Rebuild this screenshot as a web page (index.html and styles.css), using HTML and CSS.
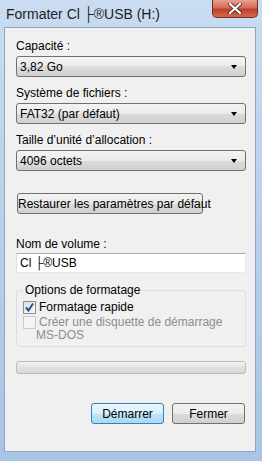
FILE: index.html
```html
<!DOCTYPE html>
<html lang="fr">
<head>
    <meta charset="UTF-8">
    <title>Formater Cl ├®USB (H:)</title>
    <link rel="stylesheet" href="styles.css">
</head>
<body>
    <div class="window">
        <div class="titlebar">
            <span class="title">Formater Cl ├®USB (H:)</span>
            <div class="close">
                <svg width="16" height="11" viewBox="0 0 16 11">
                    <path d="M3 1 L13 10 M13 1 L3 10" stroke="#5a3030" stroke-width="4" stroke-linecap="round"/>
                    <path d="M3 1 L13 10 M13 1 L3 10" stroke="#fff" stroke-width="2.2" stroke-linecap="round"/>
                </svg>
            </div>
        </div>
        <div class="client">
            <div class="label">Capacité :</div>
            <div class="combo"><span>3,82 Go</span><i class="arrow"></i></div>

            <div class="label">Système de fichiers :</div>
            <div class="combo"><span>FAT32 (par défaut)</span><i class="arrow"></i></div>

            <div class="label">Taille d’unité d’allocation :</div>
            <div class="combo"><span>4096 octets</span><i class="arrow"></i></div>

            <div class="restore-row">
                <button class="btn restore">Restaurer les paramètres par défaut</button>
            </div>

            <div class="label volume-label">Nom de volume :</div>
            <div class="textbox">Cl ├®USB</div>

            <div class="group">
                <span class="legend">Options de formatage</span>
                <div class="check-row">
                    <span class="checkbox checked">
                        <svg width="11" height="11" viewBox="0 0 11 11">
                            <path d="M2 5.5 L4.5 8.5 L9 1.5" fill="none" stroke="#2a4f9a" stroke-width="2"/>
                        </svg>
                    </span>
                    <span>Formatage rapide</span>
                </div>
                <div class="check-row disabled">
                    <span class="checkbox"></span>
                    <span class="two-lines">Créer une disquette de démarrage<span class="second">MS-DOS</span></span>
                </div>
            </div>

            <div class="progress"></div>

            <div class="actions">
                <button class="btn default">Démarrer</button>
                <button class="btn">Fermer</button>
            </div>
        </div>
    </div>
</body>
</html>
```

FILE: styles.css
```css
body {
    margin: 0;
    width: 262px;
    height: 461px;
    overflow: hidden;
    font-family: "Liberation Sans", Arial, sans-serif;
    font-size: 12px;
    color: #000;
    background: linear-gradient(to bottom, #c9dcf1, #b4cde9 60%, #a9c4e4);
}
.window {
    padding: 0 6px 9px 4px;
}
.titlebar {
    height: 27px;
    display: flex;
    justify-content: space-between;
    align-items: flex-start;
}
.title {
    padding: 6px 0 0 2px;
    font-size: 14px;
    line-height: 17px;
    color: #1e1e1e;
}
.close {
    width: 46px;
    height: 18px;
    margin-right: -2px;
    border: 1px solid #7a2a22;
    border-top: none;
    border-radius: 0 0 5px 5px;
    background: linear-gradient(to bottom, #e8a08f, #d46a56 45%, #c0402c 55%, #cf6a4e);
    display: flex;
    align-items: center;
    justify-content: center;
    box-sizing: border-box;
}
.client {
    height: 425px;
    box-sizing: border-box;
    border: 1px solid #8ea4bf;
    background: #f0f0f0;
    padding: 11px 9px 0 11px;
}
.label {
    line-height: 14px;
    height: 14px;
    margin-bottom: 3px;
}
.combo {
    height: 21px;
    box-sizing: border-box;
    border: 1px solid #707070;
    border-radius: 3px;
    background: linear-gradient(to bottom, #f3f3f3, #ebebeb 50%, #dddddd 50%, #d0d0d0);
    display: flex;
    align-items: center;
    justify-content: space-between;
    padding: 0 8px 0 3px;
    margin-bottom: 9px;
}
.arrow {
    width: 0;
    height: 0;
    border-left: 3.5px solid transparent;
    border-right: 3.5px solid transparent;
    border-top: 4px solid #000;
}
.restore-row {
    display: flex;
    margin-top: 22px;
}
.btn {
    font: inherit;
    color: #000;
    height: 21px;
    padding: 0;
    white-space: nowrap;
    border: 1px solid #707070;
    border-radius: 3px;
    background: linear-gradient(to bottom, #f2f2f2, #ebebeb 50%, #dddddd 50%, #cfcfcf);
}
.restore {
    width: 186px;
    margin-left: 1px;
}
.volume-label {
    margin-top: 23px;
    margin-bottom: 2px;
}
.textbox {
    height: 20px;
    box-sizing: border-box;
    width: 230px;
    background: #fff;
    border: 1px solid #e3e9ef;
    border-top-color: #abadb3;
    border-left-color: #dbdfe6;
    padding: 2px 0 0 3px;
    line-height: 14px;
}
.group {
    position: relative;
    margin-top: 17px;
    width: 230px;
    height: 57px;
    box-sizing: border-box;
    border: 1px solid #d5dfe5;
    border-radius: 3px;
    padding: 10px 0 0 6px;
}
.legend {
    position: absolute;
    top: -8px;
    left: 6px;
    padding: 0 2px;
    background: #f0f0f0;
    line-height: 14px;
}
.check-row {
    display: flex;
    align-items: flex-start;
    line-height: 13px;
    margin-bottom: 2px;
}
.checkbox {
    width: 13px;
    height: 13px;
    box-sizing: border-box;
    border: 1px solid #8e8f8f;
    background: linear-gradient(135deg, #dcdcdc, #fbfbfb);
    margin-right: 3px;
    flex-shrink: 0;
    display: flex;
    align-items: center;
    justify-content: center;
}
.disabled {
    color: #8d8d8d;
}
.disabled .checkbox {
    border-color: #c8c8c8;
    background: #f4f4f4;
}
.two-lines {
    line-height: 13px;
}
.second {
    display: block;
    margin-left: -3px;
}
.progress {
    margin-top: 14px;
    width: 230px;
    height: 13px;
    box-sizing: border-box;
    border: 1px solid #bcbcbc;
    border-radius: 3px;
    background: linear-gradient(to bottom, #f3f3f3, #e2e2e2 50%, #d6d6d6);
}
.actions {
    margin-top: 29px;
    display: flex;
    justify-content: flex-end;
    gap: 8px;
    padding-right: 1px;
}
.actions .btn {
    width: 73px;
}
.btn.default {
    border-color: #3c7fb1;
    background: linear-gradient(to bottom, #eaf6fd, #d9f0fc 50%, #bee6fd 50%, #a7d9f5);
}
```
